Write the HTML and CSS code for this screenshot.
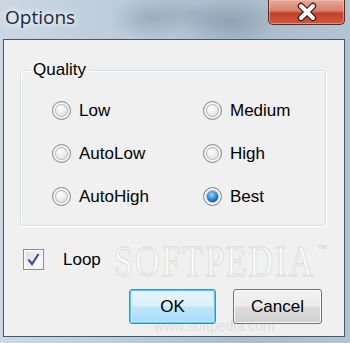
FILE: index.html
```html
<!DOCTYPE html>
<html>
<head>
<meta charset="utf-8">
<link rel="stylesheet" href="styles.css">
</head>
<body>
<div class="window">
  <div class="titlebar">
    <span class="title">Options</span>
    <div class="close">
      <svg width="28" height="20" viewBox="0 0 28 20">
        <path d="M8 4 L20 16 M20 4 L8 16" stroke="#3a1a14" stroke-width="6.5" stroke-linecap="round"/>
        <path d="M8 4 L20 16 M20 4 L8 16" stroke="#ffffff" stroke-width="4" stroke-linecap="round"/>
      </svg>
    </div>
  </div>
  <div class="client">
    <fieldset class="group">
      <legend>Quality</legend>
      <div class="options">
        <div class="opt"><span class="radio"></span>Low</div>
        <div class="opt"><span class="radio"></span>Medium</div>
        <div class="opt"><span class="radio"></span>AutoLow</div>
        <div class="opt"><span class="radio"></span>High</div>
        <div class="opt"><span class="radio"></span>AutoHigh</div>
        <div class="opt"><span class="radio checked"></span>Best</div>
      </div>
    </fieldset>
    <div class="check">
      <span class="box">
        <svg width="15" height="15" viewBox="0 0 15 15"><path d="M2.5 7.5 L6 12 L12.5 2" fill="none" stroke="#3a52a4" stroke-width="2.2"/></svg>
      </span>
      <span>Loop</span>
    </div>
    <div class="buttons">
      <button class="btn ok">OK</button>
      <button class="btn">Cancel</button>
    </div>
    <div class="watermark"><span class="wm-text">SOFTPEDIA</span><span class="wm-tm">™</span></div>
    <div class="wm-url">www.softpedia.com</div>
  </div>
</div>
</body>
</html>
```
FILE: styles.css
```css
html, body {
  margin: 0;
  padding: 0;
  width: 350px;
  height: 343px;
  overflow: hidden;
}
.window {
  width: 350px;
  height: 343px;
  box-sizing: border-box;
  background:
    radial-gradient(ellipse 40px 22px at 150px 18px, rgba(120,140,160,0.45), transparent),
    radial-gradient(ellipse 50px 24px at 230px 22px, rgba(110,130,150,0.45), transparent),
    radial-gradient(ellipse 40px 20px at 190px 14px, rgba(140,160,180,0.4), transparent),
    linear-gradient(90deg, #cbd8e4 0%, #b9cad9 40%, #a9bccd 70%, #b3c3d2 100%);
  font-family: "Liberation Sans", Arial, sans-serif;
  overflow: hidden;
}
.titlebar {
  height: 39px;
  display: flex;
  align-items: flex-start;
  justify-content: space-between;
}
.title {
  font-family: "Open Sans", "Noto Sans", sans-serif;
  font-size: 19px;
  color: #1c2740;
  margin: 4px 0 0 5px;
  line-height: 26px;
  text-shadow: 0 0 6px rgba(255,255,255,0.95), 0 0 10px rgba(255,255,255,0.8);
}
.close {
  width: 77px;
  height: 25px;
  margin-right: 5px;
  box-sizing: border-box;
  border: 1px solid #5a2a22;
  border-top: none;
  border-radius: 0 0 5px 5px;
  background: linear-gradient(180deg, #e6a99a 0%, #d8806a 45%, #c2402a 55%, #cf5a3c 100%);
  box-shadow: inset 0 0 0 1px rgba(255,200,190,0.5);
  display: flex;
  align-items: center;
  justify-content: center;
}
.client {
  margin-left: 3px;
  width: 342px;
  height: 298px;
  box-sizing: border-box;
  border: 1px solid #4a5666;
  background: #f0f0f0;
  position: relative;
  overflow: hidden;
  font-size: 17px;
  color: #000;
}
.group {
  margin: 20px 0 0 16px;
  width: 306px;
  box-sizing: border-box;
  border: 1px solid #d5dfe5;
  border-radius: 3px;
  box-shadow: inset 1px 1px 0 #ffffff, 1px 1px 0 #ffffff;
  padding: 0 0 7px 0;
}
.group legend {
  margin-left: 9px;
  padding: 0 3px;
  line-height: 20px;
  font-size: 17px;
}
.options {
  display: grid;
  grid-template-columns: 151px 1fr;
  grid-auto-rows: 43px;
  padding: 9px 0 0 31px;
}
.opt {
  display: flex;
  align-items: center;
  gap: 8px;
}
.radio {
  width: 19px;
  height: 19px;
  box-sizing: border-box;
  border-radius: 50%;
  border: 1px solid #8a8a8a;
  background: radial-gradient(circle at 40% 35%, #ffffff 0%, #e8e8e8 45%, #cfcfcf 100%);
  box-shadow: inset 0 0 0 2px #f4f4f4, inset 0 0 0 3px #b8b8b8;
  flex: none;
}
.radio.checked {
  background:
    radial-gradient(circle at 45% 40%, #8fd8ff 0%, #2a8ad4 35%, #0a4f98 55%, transparent 60%),
    radial-gradient(circle at 40% 35%, #ffffff 0%, #e8e8e8 45%, #cfcfcf 100%);
}
.check {
  display: flex;
  align-items: center;
  gap: 19px;
  margin: 23px 0 0 19px;
  height: 21px;
}
.box {
  width: 21px;
  height: 21px;
  box-sizing: border-box;
  border: 1px solid #8e8f8f;
  background: linear-gradient(135deg, #d8d8da 0%, #f4f4f6 60%, #ffffff 100%);
  box-shadow: inset 0 0 0 2px #f6f6f6;
  display: flex;
  align-items: center;
  justify-content: center;
}
.buttons {
  display: flex;
  justify-content: flex-end;
  gap: 17px;
  margin-top: 19px;
  padding-right: 22px;
  position: relative;
  z-index: 1;
}
.btn {
  height: 35px;
  width: 89px;
  box-sizing: border-box;
  font-family: "Liberation Sans", Arial, sans-serif;
  font-size: 17px;
  color: #000;
  border: 1px solid #707070;
  border-radius: 3px;
  background: linear-gradient(180deg, #f2f2f2 0%, #ebebeb 48%, #dddddd 52%, #cfcfcf 100%);
  box-shadow: inset 0 0 0 1px #fbfbfb;
  padding: 0;
}
.btn.ok {
  width: 87px;
  border: 1px solid #3c8fc8;
  background: linear-gradient(180deg, #eaf6fd 0%, #d9f0fc 48%, #bee6fd 52%, #a7d9f5 100%);
  box-shadow: inset 0 0 0 1px #5cc6f2, inset 0 0 0 2px #c8ecfc;
}
.watermark {
  position: absolute;
  left: 110px;
  top: 200px;
  width: 225px;
  height: 50px;
  pointer-events: none;
  display: flex;
  align-items: flex-start;
}
.wm-text {
  font-family: "Liberation Serif", serif;
  font-size: 34px;
  line-height: 34px;
  letter-spacing: 2px;
  color: rgba(255,255,255,0.7);
  -webkit-text-stroke: 1px rgba(185,185,185,0.35);
  transform: scaleY(1.3);
  transform-origin: top left;
}
.wm-tm {
  font-size: 10px;
  line-height: 10px;
  color: rgba(170,170,170,0.5);
  margin: 4px 0 0 2px;
}
.wm-url {
  position: absolute;
  left: 150px;
  top: 278px;
  font-family: "Liberation Sans", sans-serif;
  font-size: 14px;
  line-height: 16px;
  color: rgba(200,200,200,0.45);
  pointer-events: none;
}
```
